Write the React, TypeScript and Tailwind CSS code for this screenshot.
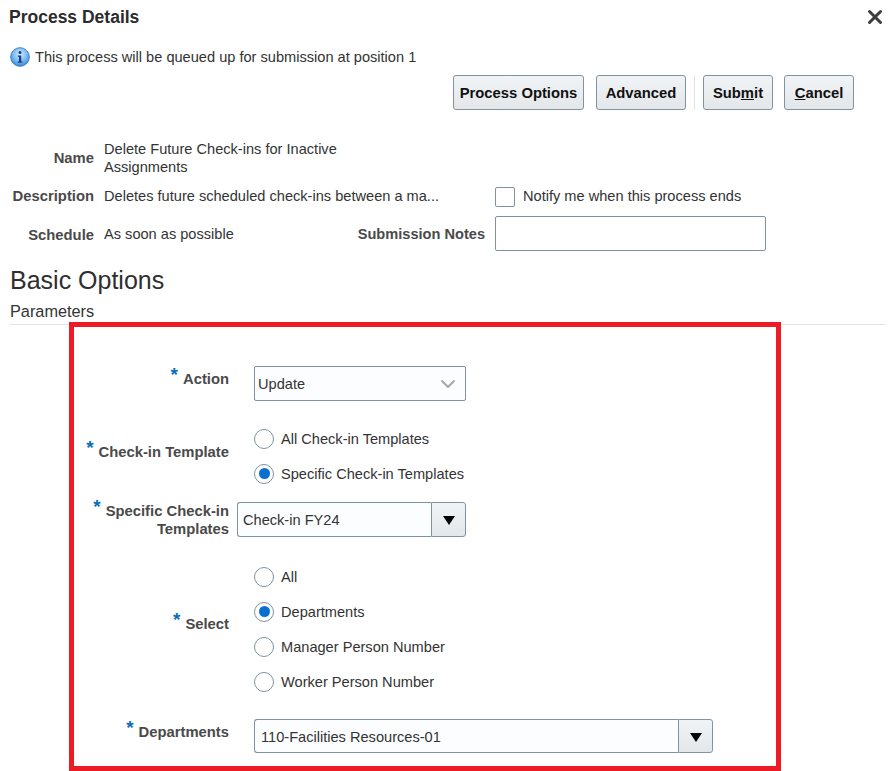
import { X, ChevronDown } from "lucide-react";

const font = "font-['Liberation_Sans',Arial,sans-serif]";

function Btn({ label, width }: { label: React.ReactNode; width: string }) {
  return (
    <button className={`h-[35px] ${width} rounded-[3px] border border-[#7f93a3] bg-gradient-to-b from-[#f1f4f6] to-[#e3e7ea] pt-[2px] text-[14.8px] font-bold text-[#111] flex items-center justify-center`}>
      {label}
    </button>
  );
}

function Radio({ label, checked }: { label: string; checked?: boolean }) {
  return (
    <div className="flex h-[35px] items-center">
      <span className="flex h-5 w-5 items-center justify-center rounded-full border border-[#7f939f] bg-white">
        {checked && <span className="h-[11px] w-[11px] rounded-full bg-[#0a6fd1]" />}
      </span>
      <span className="ml-[7px] pt-[2px] text-[14.6px] text-[#333]">{label}</span>
    </div>
  );
}

function Req({ children }: { children: React.ReactNode }) {
  return (
    <div className="text-right text-[14.8px] font-bold leading-[18px] text-[#4a4a4a]">
      {children}
    </div>
  );
}

function Star() {
  return <span className="relative top-[-3px] mr-[5px] text-[19px] font-bold leading-none text-[#0a6fb8]">*</span>;
}

function ComboArrow() {
  return (
    <span className="flex h-full w-[35px] shrink-0 items-center justify-center rounded-r-[3px] border border-[#7f93a3] bg-gradient-to-b from-[#f1f4f6] to-[#e3e7ea]">
      <span className="mt-[2px] h-0 w-0 border-x-[6px] border-t-[9px] border-x-transparent border-t-black" />
    </span>
  );
}

export default function App() {
  return (
    <div className={`${font} h-[771px] w-[896px] overflow-hidden bg-white text-[#333]`}>
      <div className="flex h-[34px] items-center justify-between pl-[9px] pr-[10px]">
        <h1 className="text-[17.5px] font-bold text-[#2b2b2b]">Process Details</h1>
        <X className="h-[22px] w-[22px] text-[#3c3c3c]" strokeWidth={3.2} />
      </div>

      <div className="mt-[12px] flex h-[22px] items-center pl-[10px]">
        <svg viewBox="0 0 20 20" className="h-[20px] w-[20px]">
          <defs>
            <radialGradient id="infoFill" cx="50%" cy="35%" r="70%">
              <stop offset="0%" stopColor="#d6ecff" />
              <stop offset="60%" stopColor="#6fb4ee" />
              <stop offset="100%" stopColor="#2c7dcb" />
            </radialGradient>
          </defs>
          <circle cx="10" cy="10" r="9.3" fill="url(#infoFill)" stroke="#3b80c4" strokeWidth="1" />
          <circle cx="10" cy="5.6" r="1.5" fill="#123f86" />
          <path d="M7.8 8.5h3.4v6h1.2v1.2H7.8v-1.2H9V9.7H7.8z" fill="#123f86" />
        </svg>
        <span className="ml-[5px] pt-[2px] text-[14.6px] text-[#333]">This process will be queued up for submission at position 1</span>
      </div>

      <div className="mt-[7px] flex items-center pl-[453px]">
        <Btn label="Process Options" width="w-[131px]" />
        <div className="ml-[12px]"><Btn label="Advanced" width="w-[90px]" /></div>
        <div className="ml-[8px] mr-[8px] h-[35px] w-px bg-[#dfe3e6]" />
        <Btn label={<>Sub<u>m</u>it</>} width="w-[70px]" />
        <div className="ml-[11px]"><Btn label={<><u>C</u>ancel</>} width="w-[70px]" /></div>
      </div>

      <div className="mt-[30px] flex h-[38px] pl-[10px] text-[14.6px]">
        <div className="w-[84px] pt-[7px] text-right text-[14.8px] font-bold text-[#4a4a4a]">Name</div>
        <div className="ml-[10px] w-[260px] leading-[18px]">Delete Future Check-ins for Inactive Assignments</div>
      </div>
      <div className="mt-[9px] flex h-[19px] items-center pl-[10px] text-[14.6px]">
        <div className="w-[84px] text-right text-[14.8px] font-bold text-[#4a4a4a]">Description</div>
        <div className="ml-[10px] w-[391px]">Deletes future scheduled check-ins between a ma...</div>
        <span className="h-5 w-5 rounded-[2px] border border-[#7f939f] bg-white" />
        <span className="ml-[8px]">Notify me when this process ends</span>
      </div>
      <div className="mt-[10px] flex h-[35px] items-center pl-[10px] text-[14.6px]">
        <div className="w-[84px] pt-[3px] text-right text-[14.8px] font-bold text-[#4a4a4a]">Schedule</div>
        <div className="ml-[10px] w-[150px] pt-[3px]">As soon as possible</div>
        <div className="w-[231px] pt-[3px] text-right text-[14.6px] font-bold text-[#4a4a4a]">Submission Notes</div>
        <div className="ml-[10px] h-[35px] w-[271px] rounded-[2px] border border-[#7f939f] bg-white" />
      </div>

      <h2 className="mt-[14px] pl-[10px] text-[25px] leading-[30px] text-[#2f2f2f]">Basic Options</h2>
      <div className="mt-[7px] pl-[10px] text-[16.3px] leading-[18px]">Parameters</div>
      <div className="relative mx-[10px] mt-[4px] h-px w-[875px] bg-[#dfe3e6]" />

      <div className="relative ml-[69px] mt-[-3px] h-[449px] w-[712px] border-[5px] border-[#ed1c24] bg-white">
        <div className="grid grid-cols-[155px_1fr] pt-[39px]">
          <div className="mt-[2px] self-start"><Req><Star />Action</Req></div>
          <div className="ml-[25px] flex h-[35px] w-[212px] items-center justify-between rounded-[2px] border border-[#7f939f] bg-[#fcfdfe] pl-[3px] pr-[5px] text-[14.6px]">
            <span className="pt-[2px]">Update</span>
            <ChevronDown className="h-6 w-6 text-[#9aa5ad]" strokeWidth={1.8} />
          </div>

          <div className="mt-[40px] self-start"><Req><Star />Check-in Template</Req></div>
          <div className="ml-[25px] mt-[20px]">
            <Radio label="All Check-in Templates" />
            <Radio label="Specific Check-in Templates" checked />
          </div>

          <div className="mt-[9px]"><Req><Star />Specific Check-in<br />Templates</Req></div>
          <div className="ml-[8px] mt-[11px] flex h-[35px] w-[229px]">
            <span className="flex flex-1 items-center rounded-l-[3px] border border-r-0 border-[#7f939f] bg-[#fcfdfe] pl-[5px] pt-[2px] text-[14.6px]">Check-in FY24</span>
            <ComboArrow />
          </div>

          <div className="mt-[75px] self-start"><Req><Star />Select</Req></div>
          <div className="ml-[25px] mt-[21px]">
            <Radio label="All" />
            <Radio label="Departments" checked />
            <Radio label="Manager Person Number" />
            <Radio label="Worker Person Number" />
          </div>

          <div className="mt-[22px]"><Req><Star />Departments</Req></div>
          <div className="ml-[25px] mt-[20px] flex h-[34px] w-[459px]">
            <span className="flex flex-1 items-center rounded-l-[3px] border border-r-0 border-[#7f939f] bg-[#fcfdfe] pl-[6px] pt-[3px] text-[14.6px]">110-Facilities Resources-01</span>
            <ComboArrow />
          </div>
        </div>
      </div>
    </div>
  );
}
